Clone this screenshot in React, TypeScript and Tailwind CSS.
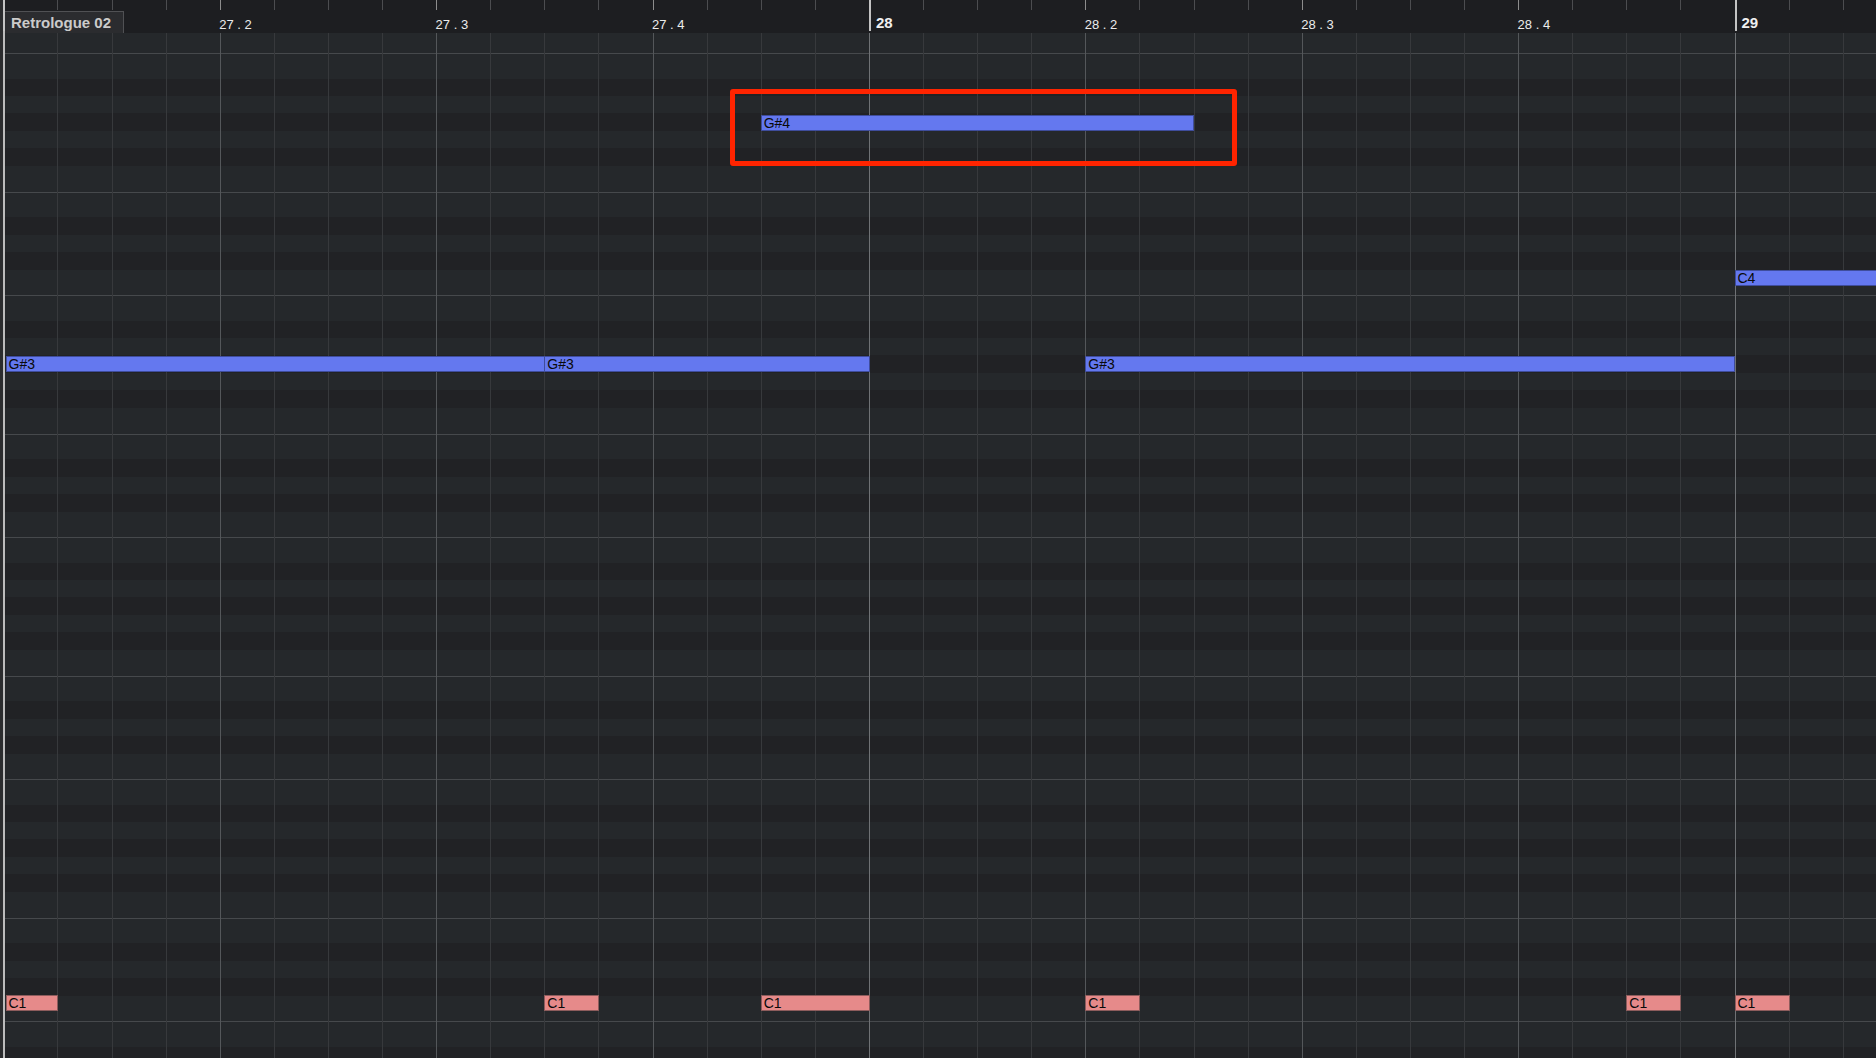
import React from 'react';

// one 16th step on screen, and the page x of bar 27 (hidden under the left edge)
const STEP = 54.1;
const ORIGIN = 3.3;
const EDGE = 5; // dark strip + light border on the left
const lx = (i: number) => ORIGIN + STEP * i - EDGE;

type Note = { name: string; start: number; end: number; top: number; drum?: boolean };

const notes: Note[] = [
  { name: 'G#4', start: 14, end: 22, top: 114.5 },
  { name: 'G#3', start: 0, end: 10, top: 356 },
  { name: 'G#3', start: 10, end: 16, top: 356 },
  { name: 'G#3', start: 20, end: 32, top: 356 },
  { name: 'C4', start: 32, end: 40, top: 269.5 },
  { name: 'C1', start: 0, end: 1, top: 994.5, drum: true },
  { name: 'C1', start: 10, end: 11, top: 994.5, drum: true },
  { name: 'C1', start: 14, end: 16, top: 994.5, drum: true },
  { name: 'C1', start: 20, end: 21, top: 994.5, drum: true },
  { name: 'C1', start: 30, end: 31, top: 994.5, drum: true },
  { name: 'C1', start: 32, end: 33, top: 994.5, drum: true },
];

const beatLabels = [
  { i: 4, text: '27 . 2' },
  { i: 8, text: '27 . 3' },
  { i: 12, text: '27 . 4' },
  { i: 20, text: '28 . 2' },
  { i: 24, text: '28 . 3' },
  { i: 28, text: '28 . 4' },
];

const barLabels = [
  { i: 16, text: '28' },
  { i: 32, text: '29' },
];

const steps = Array.from({ length: 36 }, (_, i) => i);

// key bands between the grid lines: true = black key (darker)
const SEVEN: [number, boolean][] = [
  [26, false], [17, true], [17, false], [18, true], [17, false], [18, true], [26, false],
];
const FIVE: [number, boolean][] = [
  [25, false], [18, true], [17, false], [18, true], [25, false],
];

const Band = ({ h, dark, line }: { h?: number; dark: boolean; line?: boolean }) => (
  <div
    className={`${dark ? 'bg-[#212225]' : 'bg-[#25282b]'} ${line ? 'border-t border-[#46494c]' : ''} ${h === undefined ? 'flex-1' : 'shrink-0'}`}
    style={h === undefined ? undefined : { height: h }}
  />
);

const Chunk = ({ bands }: { bands: [number, boolean][] }) => (
  <div className="flex flex-col">
    {bands.map(([h, dark], k) => (
      <Band key={k} h={h} dark={dark} line={k === 0} />
    ))}
  </div>
);

export default function App() {
  return (
    <div className="w-[1876px] h-[1058px] flex overflow-hidden bg-[#1d1e21] font-['Liberation_Sans',Arial,sans-serif]">
      {/* left edge */}
      <div className="w-[3px] shrink-0 bg-[#2b2c2e]" />
      <div className="w-[2px] shrink-0 bg-[#bcbcbc]" />

      <div className="flex-1 flex flex-col min-w-0">
        {/* ruler */}
        <div className="h-[33px] shrink-0 relative bg-[#1d1e21]">
          {steps.map((i) => {
            const bar = i % 16 === 0;
            const beat = i % 4 === 0;
            return (
              <div
                key={i}
                className={`absolute top-0 ${bar ? 'h-[31px] w-[2px] bg-[#c4c4c4]' : beat ? 'h-[10px] w-px bg-[#8d8d8d]' : 'h-[10px] w-px bg-[#4c4d50]'}`}
                style={{ left: lx(i) }}
              />
            );
          })}
          {beatLabels.map((l) => (
            <div
              key={l.text}
              className="absolute top-[17.5px] text-[13px] leading-[13px] font-medium text-[#ececec] whitespace-pre"
              style={{ left: lx(l.i) - 0.5 }}
            >
              {l.text}
            </div>
          ))}
          {barLabels.map((l) => (
            <div
              key={l.text}
              className="absolute top-[14.5px] text-[15px] leading-[15px] font-bold text-[#f0f0f0]"
              style={{ left: lx(l.i) + 7 }}
            >
              {l.text}
            </div>
          ))}

          {/* part name */}
          <div className="absolute left-0 top-[11px] h-[22px] w-[119px] bg-[#2b2c2f] border-t border-r border-[#505154] pl-[6px] flex items-center">
            <span className="text-[15px] leading-none font-bold text-[#cbcbcb]">Retrologue 02</span>
          </div>
        </div>

        {/* note grid */}
        <div className="flex-1 relative overflow-hidden">
          <div className="flex flex-col h-full">
            <Band h={20} dark={false} />
            <Chunk bands={SEVEN} />
            <Chunk bands={FIVE} />
            <Chunk bands={SEVEN} />
            <Chunk bands={FIVE} />
            <Chunk bands={SEVEN} />
            <Chunk bands={FIVE} />
            <Chunk bands={SEVEN} />
            <Chunk bands={FIVE} />
            <Band h={26} dark={false} line />
            <Band dark />
          </div>

          {/* vertical lines */}
          {steps.map((i) => {
            const bar = i % 16 === 0;
            const beat = i % 4 === 0;
            return (
              <div
                key={i}
                className={`absolute top-0 bottom-0 w-px ${bar ? 'bg-[#6f7275]' : beat ? 'bg-[#54575a]' : 'bg-[#37393c]'}`}
                style={{ left: lx(i) }}
              />
            );
          })}

          {/* notes */}
          {notes.map((n, k) => {
            const left = Math.max(lx(n.start), 0.5);
            const right = lx(n.end) + 1;
            return (
              <div
                key={k}
                className={`absolute h-[16px] border pl-[2px] text-[14px] leading-[14px] text-[#0a0a0a] overflow-hidden whitespace-nowrap ${n.drum ? 'bg-[#e68a8a] border-[#8d5c5c]' : 'bg-[#6478ef] border-[#3f4d9c]'}`}
                style={{ left, width: right - left, top: n.top - 33 }}
              >
                {n.name}
              </div>
            );
          })}

          {/* highlight */}
          <div className="absolute left-[725px] top-[55.5px] w-[507px] h-[77px] border-[5px] border-[#ff2400] rounded-[3px]" />
        </div>
      </div>
    </div>
  );
}
